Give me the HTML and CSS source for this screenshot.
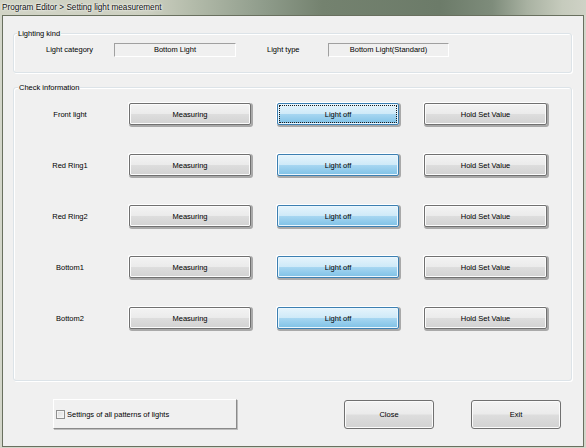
FILE: index.html
```html
<!DOCTYPE html>
<html>
<head>
<meta charset="utf-8">
<link rel="stylesheet" href="styles.css">
</head>
<body>
<div class="titlebar">Program Editor &gt; Setting light measurement</div>
<div class="client">
  <div class="group g1">
    <span class="legend">Lighting kind</span>
    <div class="kind-row">
      <span class="lbl lbl-cat">Light category</span>
      <span class="box box-cat">Bottom Light</span>
      <span class="lbl lbl-type">Light type</span>
      <span class="box box-type">Bottom Light(Standard)</span>
    </div>
  </div>
  <div class="group g2">
    <span class="legend legend2">Check information</span>
    <div class="rows">
      <div class="row">
        <span class="row-lbl">Front light</span>
        <button class="btn btn-meas">Measuring</button>
        <button class="btn btn-blue btn-off focus">Light off</button>
        <button class="btn btn-hold">Hold Set Value</button>
      </div>
      <div class="row">
        <span class="row-lbl">Red Ring1</span>
        <button class="btn btn-meas">Measuring</button>
        <button class="btn btn-blue btn-off">Light off</button>
        <button class="btn btn-hold">Hold Set Value</button>
      </div>
      <div class="row">
        <span class="row-lbl">Red Ring2</span>
        <button class="btn btn-meas">Measuring</button>
        <button class="btn btn-blue btn-off">Light off</button>
        <button class="btn btn-hold">Hold Set Value</button>
      </div>
      <div class="row">
        <span class="row-lbl">Bottom1</span>
        <button class="btn btn-meas">Measuring</button>
        <button class="btn btn-blue btn-off">Light off</button>
        <button class="btn btn-hold">Hold Set Value</button>
      </div>
      <div class="row">
        <span class="row-lbl">Bottom2</span>
        <button class="btn btn-meas">Measuring</button>
        <button class="btn btn-blue btn-off">Light off</button>
        <button class="btn btn-hold">Hold Set Value</button>
      </div>
    </div>
  </div>
  <div class="footer">
    <label class="chk-btn"><span class="chk"></span><span class="chk-text">Settings of all patterns of lights</span></label>
    <button class="btn btn-big btn-close">Close</button>
    <button class="btn btn-big btn-exit">Exit</button>
  </div>
</div>
</body>
</html>
```
FILE: styles.css
```css
html, body {
  margin: 0;
  padding: 0;
}
body {
  width: 586px;
  height: 448px;
  overflow: hidden;
  background: #d3d6ca;
  font-family: "Liberation Sans", Arial, sans-serif;
  font-size: 7.5px;
  color: #000;
}
.titlebar {
  height: 15px;
  line-height: 15px;
  padding-left: 2px;
  font-size: 8.2px;
  color: #111;
  text-shadow: 0 0 3px #fff, 0 0 2px #fff;
  background: linear-gradient(90deg, #d2d4c6 0%, #cdd0c1 25%, #b3bbaa 33%, #8f9c8b 45%, #74826f 55%, #6c7b69 75%, #7e8c7b 84%, #a9b2a2 90%, #c6cbbd 96%, #cfd2c6 100%);
}
.client {
  box-sizing: border-box;
  margin: 0 2px 0 2px;
  width: 582px;
  height: 432px;
  border: 1px solid #69705f;
  background: #f0f0f0;
  overflow: hidden;
}
.group {
  position: relative;
  box-sizing: border-box;
  margin-left: 10px;
  width: 559px;
  border: 1px solid #dce3e8;
  border-radius: 3px;
  box-shadow: inset 1px 1px 0 #fff, 1px 1px 0 #fff;
}
.g1 {
  margin-top: 17px;
  height: 40px;
  padding-top: 9px;
}
.g2 {
  margin-top: 14px;
  height: 294px;
  padding-top: 15px;
}
.legend {
  position: absolute;
  top: -5px;
  left: 3px;
  padding: 0 1px;
  line-height: 9px;
  background: #f0f0f0;
}
.legend2 {
  left: 4px;
}
.kind-row {
  display: flex;
  align-items: center;
  height: 14px;
}
.lbl {
  line-height: 14px;
}
.lbl-cat {
  margin-left: 32px;
  width: 68px;
}
.lbl-type {
  margin-left: 31px;
  width: 61px;
}
.box {
  box-sizing: border-box;
  height: 14px;
  line-height: 12px;
  text-align: center;
  border: 1px solid #a0a0a0;
  border-right-color: #fff;
  border-bottom-color: #fff;
}
.box-cat {
  width: 122px;
}
.box-type {
  width: 121px;
}
.rows {
  display: flex;
  flex-direction: column;
  gap: 29px;
}
.row {
  display: flex;
  align-items: center;
  height: 22px;
}
.row-lbl {
  box-sizing: border-box;
  width: 115px;
  padding-right: 3px;
  text-align: center;
}
.btn {
  box-sizing: border-box;
  height: 22px;
  padding: 0;
  font-family: "Liberation Sans", Arial, sans-serif;
  font-size: 7.5px;
  color: #000;
  border: 1px solid #707070;
  border-radius: 2px;
  background: linear-gradient(#f3f3f3 0%, #ebebeb 48%, #dddddd 52%, #d2d2d2 100%);
  box-shadow: inset 0 0 0 1px #fbfbfb, -1px -1px 0 #fff, 1px 1px 0 1px #a9a9a9;
}
.btn-meas {
  width: 122px;
}
.btn-off {
  width: 122px;
  margin-left: 26px;
}
.btn-hold {
  width: 123px;
  margin-left: 25px;
}
.btn-blue {
  border-color: #3c7fb1;
  background: linear-gradient(#e5f4fc 0%, #cfeaf8 48%, #a6d6f1 52%, #7ec1e6 100%);
  box-shadow: inset 0 0 0 1px #eaf6fd, -1px -1px 0 #fff, 1px 1px 0 1px #a9a9a9;
}
.focus {
  outline: 1px dotted #1a1a1a;
  outline-offset: -3px;
}
.footer {
  display: flex;
  align-items: flex-start;
  margin-top: 18px;
}
.chk-btn {
  box-sizing: border-box;
  display: flex;
  align-items: center;
  margin-left: 50px;
  width: 184px;
  height: 30px;
  padding-left: 2px;
  border-top: 1px solid #fff;
  border-left: 1px solid #fff;
  border-right: 1px solid #8a8a8a;
  border-bottom: 1px solid #8a8a8a;
  box-shadow: 1px 1px 0 #bdbdbd;
}
.chk {
  box-sizing: border-box;
  width: 9px;
  height: 9px;
  border: 1px solid #8f8f8f;
  background: linear-gradient(135deg, #dcdcdc, #f6f6f6);
  box-shadow: inset 0 0 0 1px #f4f4f4;
}
.chk-text {
  margin-left: 2px;
}
.btn-big {
  height: 29px;
  width: 90px;
  margin-top: 1px;
  border-radius: 3px;
  box-shadow: inset 0 0 0 1px #fbfbfb;
}
.btn-close {
  margin-left: 107px;
}
.btn-exit {
  margin-left: 37px;
}
```
